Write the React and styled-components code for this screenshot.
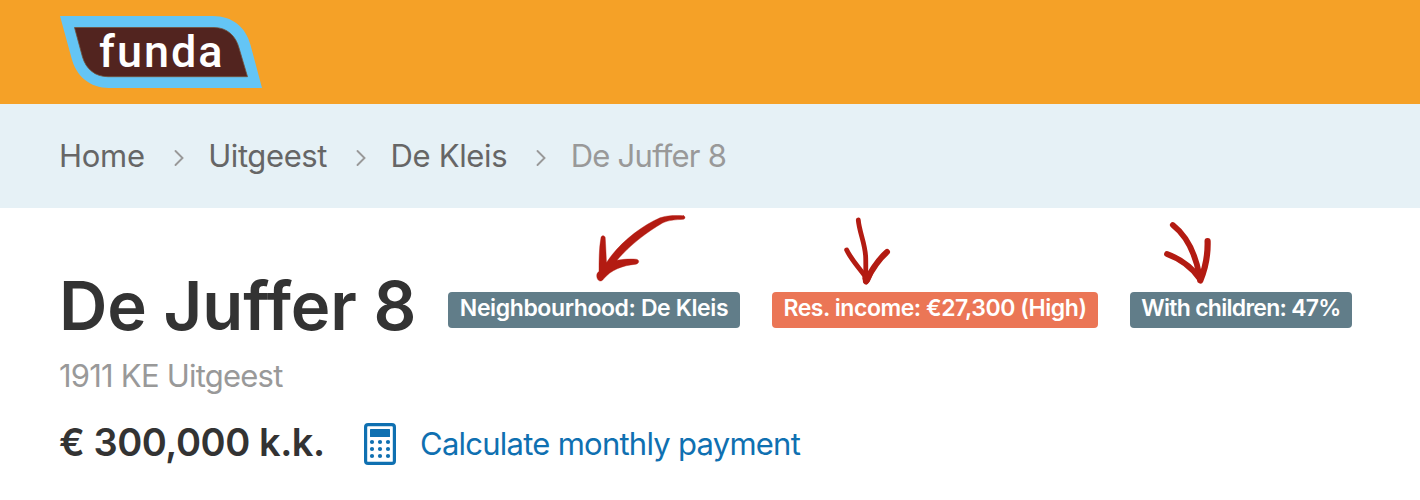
import React from 'react';
import styled, { createGlobalStyle } from 'styled-components';

const GlobalStyle = createGlobalStyle`
  *, *::before, *::after { box-sizing: border-box; }
  body {
    margin: 0;
    background: #fff;
    color: #333;
    font-family: Inter, "Liberation Sans", sans-serif;
  }
`;

const Page = styled.div`
  position: relative;
  height: 500px;
  overflow: hidden;
`;

const Header = styled.header`
  height: 104px;
  padding: 15px 60px 0;
  background: #f5a127;
`;

const LogoLink = styled.a`
  display: grid;
  width: 204px;
  height: 74px;

  > * { grid-area: 1 / 1; }
`;

const LogoShape = styled.svg`
  display: block;
  width: 204px;
  height: 74px;
`;

const LogoText = styled.span`
  z-index: 1;
  padding: 3px 0 0 39px;
  color: #fff;
  font: 500 45px/68px Roboto, sans-serif;
  letter-spacing: 2px;
`;

const Breadcrumbs = styled.nav`
  display: flex;
  align-items: center;
  height: 104px;
  padding: 0 59px;
  background: #e6f1f6;
`;

const Crumb = styled.a`
  color: ${(p) => (p.$current ? '#999' : '#666')};
  font-size: 31px;
  line-height: 40px;
  letter-spacing: ${(p) => p.$tracking}px;
  white-space: nowrap;
`;

const Chevron = styled.svg`
  flex: none;
  width: 12px;
  height: 18px;
  margin: 3px 23.5px 0 28px;
`;

const Main = styled.main`
  padding: 62px 60px 0;
`;

const TitleRow = styled.div`
  display: flex;
  align-items: flex-start;
  height: 72px;
`;

const Title = styled.h1`
  width: 389px;
  margin: 0 0 0 -1px;
  font-size: 67px;
  font-weight: 600;
  line-height: 72px;
  letter-spacing: -0.1px;
  font-variant-ligatures: no-common-ligatures;
  white-space: nowrap;
`;

const Badges = styled.div`
  display: flex;
  gap: 32px;
  padding-top: 22px;
`;

const Badge = styled.span`
  width: ${(p) => p.$width}px;
  height: 36px;
  padding-bottom: 4px;
  border-radius: 4px;
  background: ${(p) => (p.$highlight ? '#eb7656' : '#617d89')};
  color: #fff;
  font-size: 23px;
  font-weight: 600;
  line-height: 32px;
  letter-spacing: ${(p) => p.$tracking}px;
  text-align: center;
  white-space: nowrap;
`;

const Address = styled.p`
  margin: 14px 0 0 -1px;
  color: #999;
  font-size: 31px;
  line-height: 40px;
  letter-spacing: -0.78px;
`;

const PriceRow = styled.div`
  display: flex;
  align-items: center;
  height: 42px;
  margin-top: 27px;
`;

const Price = styled.strong`
  width: 305px;
  margin-left: -1px;
  padding-bottom: 4px;
  font-size: 38px;
  font-weight: 600;
  line-height: 38px;
  letter-spacing: -0.45px;
  white-space: nowrap;
`;

const CalcIcon = styled.svg`
  flex: none;
  width: 32px;
  height: 42px;
`;

const CalcLink = styled.a`
  padding: 0 0 1px 24px;
  color: #0f70b1;
  font-size: 31px;
  line-height: 40px;
  letter-spacing: -0.75px;
  white-space: nowrap;
`;

const Arrows = styled.svg`
  position: absolute;
  top: 208px;
  left: 580px;
  width: 660px;
  height: 84px;
  pointer-events: none;
`;

const crumbs = [
  { label: 'Home', tracking: -0.3 },
  { label: 'Uitgeest', tracking: -0.4 },
  { label: 'De Kleis', tracking: -0.35 },
  { label: 'De Juffer 8', tracking: -0.75, current: true },
];

const badges = [
  { label: 'Neighbourhood: De Kleis', width: 292, tracking: -0.4 },
  { label: 'Res. income: €27,300 (High)', width: 326, tracking: -0.46, highlight: true },
  { label: 'With children: 47%', width: 222, tracking: -0.72 },
];

function Logo() {
  return (
    <LogoLink>
      <LogoShape viewBox="60 15 204 74">
        <path d="M60 16H213C232 16 246 27 250.500 45L262 88H109C90 88 76 76 71.500 58Z" fill="#64c5f5" />
        <path
          d="M74.500 27.500H214C227 27.500 236 36 239 48L247.500 76.700H108C95 76.700 86 69 82.500 57Z"
          fill="#52241f"
          stroke="#755039"
          strokeWidth="0.8"
        />
      </LogoShape>
      <LogoText>funda</LogoText>
    </LogoLink>
  );
}

function Calculator() {
  return (
    <CalcIcon viewBox="0 0 32 42" fill="#0f70b1">
      <rect x="1.600" y="1.600" width="28.800" height="38.800" rx="2.500" fill="none" stroke="#0f70b1" strokeWidth="3.200" />
      <rect x="6" y="6" width="20" height="8" rx="0.500" />
      {[19, 26, 33].map((y) => [8, 16, 24].map((x) => <circle key={`${x}-${y}`} cx={x} cy={y} r="2.100" />))}
    </CalcIcon>
  );
}

function HandDrawnArrows() {
  return (
    <Arrows viewBox="580 208 660 84" fill="none" stroke="#b31b12" strokeLinecap="round" strokeLinejoin="round">
      <path
        d="M683.500 215.700C676 215.200 667 215.300 660 217.800C642 225.500 619 243 606.500 262.500C606 253 605.700 245 605.200 237.500C604.500 235.200 601.500 235.200 601 237.500C599 248 599 261 599 271.500C596.500 273 596.300 276 597.300 278.500C598.500 281.500 601.500 282 603.500 279C611 270 622 265.500 636 264.200C639.600 263.300 639.600 259.700 636 259.200C629.500 258.700 623 259.300 617 260.200C630 245 647 232 662.500 223C668 220 676 219.700 683.500 219.300C685.500 218.700 685.500 216.200 683.500 215.700Z"
        fill="#b31b12"
        stroke="#b31b12"
        strokeWidth="0.400"
      />
      <path d="M858.300 220C859.200 232 865.500 244 865.700 258C866 267 865.500 274 866 281" strokeWidth="4.800" />
      <path d="M846.700 250C851.500 260 858.500 267 865 276" strokeWidth="4.900" />
      <path d="M887 252C878.500 259.500 871.500 270 866 281.500" strokeWidth="6" />
      <path d="M862.500 278C863.200 283.500 866.500 286 869.500 281.500L873 273L865.500 270Z" fill="#b31b12" strokeWidth="0.500" />
      <path d="M1172.800 225C1187.500 236.500 1195.500 254 1199.500 276" strokeWidth="5.800" />
      <path d="M1167 254C1179.500 258.500 1191 266 1200 279" strokeWidth="5.800" />
      <path d="M1207.600 241C1208 255 1205.500 268 1200.300 280.500" strokeWidth="6.200" />
    </Arrows>
  );
}

export default function App() {
  return (
    <Page>
      <GlobalStyle />
      <Header>
        <Logo />
      </Header>
      <Breadcrumbs>
        {crumbs.map((crumb, i) => (
          <React.Fragment key={crumb.label}>
            {i > 0 && (
              <Chevron viewBox="0 0 12 18" fill="none" stroke="#999" strokeWidth="1.900" strokeLinecap="round">
                <path d="M2.500 2L9.500 9L2.500 16" />
              </Chevron>
            )}
            <Crumb $current={crumb.current} $tracking={crumb.tracking}>{crumb.label}</Crumb>
          </React.Fragment>
        ))}
      </Breadcrumbs>
      <Main>
        <TitleRow>
          <Title>De Juffer 8</Title>
          <Badges>
            {badges.map((b) => (
              <Badge key={b.label} $width={b.width} $tracking={b.tracking} $highlight={b.highlight}>{b.label}</Badge>
            ))}
          </Badges>
        </TitleRow>
        <Address>1911 KE Uitgeest</Address>
        <PriceRow>
          <Price>€ 300,000 k.k.</Price>
          <Calculator />
          <CalcLink>Calculate monthly payment</CalcLink>
        </PriceRow>
      </Main>
      <HandDrawnArrows />
    </Page>
  );
}
